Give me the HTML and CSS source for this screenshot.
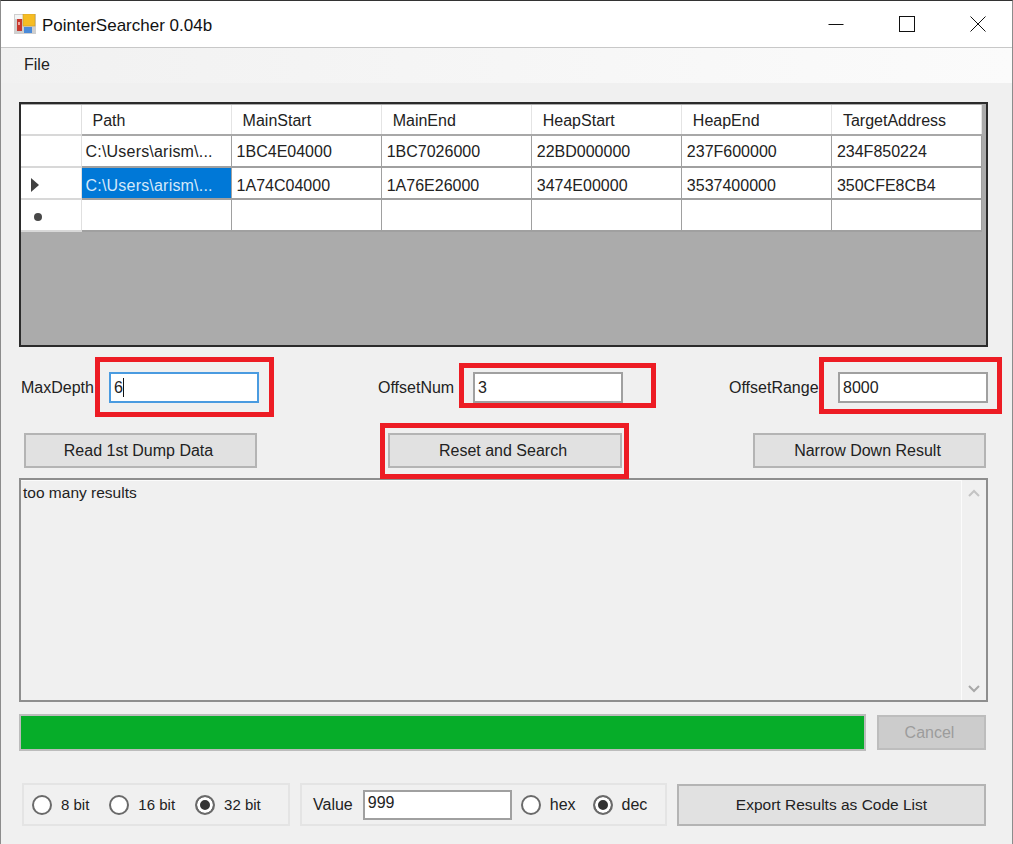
FILE: index.html
```html
<!DOCTYPE html>
<html>

<head>
    <title>PointerSearcher 0.04b</title>
    <link rel="stylesheet" href="styles.css">
</head>

<body>
    <div class="window">
        <div class="titlebar">
            <svg class="appIcon" width="22" height="20" viewBox="0 0 22 20">
                <rect x="0" y="0" width="22" height="20" fill="#cfcfcf" />
                <rect x="1" y="1" width="8" height="4" fill="#f4f4f4" />
                <rect x="3" y="5" width="5" height="12" fill="#c8362c" />
                <rect x="4" y="8" width="2" height="3" fill="#f0a8a0" />
                <rect x="9" y="0" width="12" height="12" fill="#f6bc22" stroke="#c89a30" stroke-width="0.6" />
                <rect x="10" y="13" width="8" height="6" fill="#4a8ad8" />
            </svg>
            <span class="appTitle">PointerSearcher 0.04b</span>
            <div class="winButtons">
                <svg width="16" height="16" viewBox="0 0 16 16"><path d="M0.5 8.5H15.5" stroke="#111" fill="none" /></svg>
                <svg width="16" height="16" viewBox="0 0 16 16"><rect x="0.5" y="0.5" width="15" height="15" stroke="#111" fill="none" /></svg>
                <svg width="16" height="16" viewBox="0 0 16 16"><path d="M0.5 0.5L15.5 15.5M15.5 0.5L0.5 15.5" stroke="#111" fill="none" /></svg>
            </div>
        </div>
        <div class="menubar"><span>File</span></div>

        <div class="content">
            <div class="gridView">
                <table>
                    <tr class="headRow">
                        <td class="rowHead"></td>
                        <td>Path</td>
                        <td>MainStart</td>
                        <td>MainEnd</td>
                        <td>HeapStart</td>
                        <td>HeapEnd</td>
                        <td>TargetAddress</td>
                    </tr>
                    <tr>
                        <td class="rowHead"></td>
                        <td class="pathCell">C:\Users\arism\...</td>
                        <td>1BC4E04000</td>
                        <td>1BC7026000</td>
                        <td>22BD000000</td>
                        <td>237F600000</td>
                        <td>234F850224</td>
                    </tr>
                    <tr class="currentRow">
                        <td class="rowHead"><span class="arrow"></span></td>
                        <td class="pathCell selected">C:\Users\arism\...</td>
                        <td>1A74C04000</td>
                        <td>1A76E26000</td>
                        <td>3474E00000</td>
                        <td>3537400000</td>
                        <td>350CFE8CB4</td>
                    </tr>
                    <tr>
                        <td class="rowHead"><span class="star"></span></td>
                        <td></td>
                        <td></td>
                        <td></td>
                        <td></td>
                        <td></td>
                        <td></td>
                    </tr>
                </table>
            </div>

            <div class="fieldRow">
                <div class="field depthField">
                    <span>MaxDepth</span>
                    <div class="textBox focused">6<span class="caret"></span></div>
                    <div class="mark markDepth"></div>
                </div>
                <div class="field numField">
                    <span>OffsetNum</span>
                    <div class="textBox">3</div>
                    <div class="mark markNum"></div>
                </div>
                <div class="field rangeField">
                    <span>OffsetRange</span>
                    <div class="textBox">8000</div>
                    <div class="mark markRange"></div>
                </div>
            </div>

            <div class="buttonRow">
                <div class="button">Read 1st Dump Data</div>
                <div class="button resetBtn">Reset and Search<div class="mark markReset"></div></div>
                <div class="button">Narrow Down Result</div>
            </div>

            <div class="logBox">
                <div class="logText">too many results</div>
                <div class="scrollBar">
                    <svg width="12" height="8" viewBox="0 0 12 8"><path d="M1 7L6 2L11 7" stroke="#c4c4c4" stroke-width="2" fill="none" /></svg>
                    <svg width="12" height="8" viewBox="0 0 12 8"><path d="M1 1L6 6L11 1" stroke="#a8a8a8" stroke-width="2" fill="none" /></svg>
                </div>
            </div>

            <div class="progressRow">
                <div class="progress"></div>
                <div class="button cancelBtn">Cancel</div>
            </div>

            <div class="bottomRow">
                <div class="groupBox bitGroup">
                    <span class="radio"></span><span class="radioLabel bitLabel">8 bit</span>
                    <span class="radio"></span><span class="radioLabel bitLabel">16 bit</span>
                    <span class="radio checked"></span><span class="radioLabel bitText">32 bit</span>
                </div>
                <div class="groupBox valueGroup">
                    <span class="valueLabel">Value</span>
                    <div class="textBox valueBox">999</div>
                    <span class="radio"></span><span class="radioLabel hexLabel">hex</span>
                    <span class="radio checked"></span><span class="radioLabel">dec</span>
                </div>
                <div class="button exportBtn">Export Results as Code List</div>
            </div>
        </div>
    </div>
</body>

</html>
```

FILE: styles.css
```css
html,
body {
    margin: 0;
    padding: 0;
}

body {
    width: 1013px;
    height: 844px;
    overflow: hidden;
    font-family: "Liberation Sans", Arial, sans-serif;
    font-size: 16px;
    color: #222;
    background: #f0f0f0;
}

.window {
    box-sizing: border-box;
    width: 1013px;
    height: 844px;
    border: 1px solid #8c8c8c;
    border-top-color: #333;
    border-bottom: 0;
    background: #f0f0f0;
}

.titlebar {
    display: flex;
    align-items: center;
    height: 46px;
    background: #fff;
    border-bottom: 1px solid #c8c8c8;
}

.appIcon {
    margin-left: 13px;
    margin-right: 6px;
}

.appTitle {
    margin-top: 3px;
    font-size: 17px;
    color: #111;
}

.winButtons {
    display: flex;
    gap: 55px;
    margin-left: auto;
    margin-right: 26px;
}

.menubar {
    height: 35px;
    padding-left: 23px;
    line-height: 33px;
    background: linear-gradient(to right, #f1f1f1, #fbfbfb);
}

.content {
    padding: 19px 24px 0 18px;
}

.gridView {
    box-sizing: border-box;
    height: 245px;
    background: #ababab;
    border: 2px solid #2b2b2b;
    padding-top: 1px;
}

table {
    border-collapse: collapse;
    table-layout: fixed;
    width: 961px;
    background: #fff;
}

td {
    box-sizing: border-box;
    width: 150px;
    height: 32px;
    padding: 2px 0 0 5px;
    border: 1px solid #a0a0a0;
    border-width: 0 1px 2px 1px;
    white-space: nowrap;
    overflow: hidden;
}

td:first-child {
    border-left: 0;
}

.headRow td {
    height: 30px;
    padding-left: 11px;
    border-color: #a8a8a8;
    border-right-color: #e4e4e4;
}

.currentRow td {
    padding-top: 5px;
}

td.rowHead {
    width: 60px;
    padding: 0;
    border-right-color: #e0e0e0;
    border-bottom-color: #d8d8d8;
}

.pathCell {
    padding-left: 4px;
    letter-spacing: 0.2px;
}

.selected {
    background: #0078d7;
    color: #d4e8fa;
}

.arrow {
    display: block;
    width: 0;
    height: 0;
    margin: 3px 0 0 10px;
    border-left: 8px solid #404040;
    border-top: 7px solid transparent;
    border-bottom: 7px solid transparent;
}

.star {
    display: block;
    width: 8px;
    height: 8px;
    margin: 4px 0 0 13px;
    border-radius: 50%;
    background: #484848;
}

.fieldRow {
    display: flex;
    margin-top: 25px;
}

.field {
    position: relative;
    display: flex;
    align-items: center;
    justify-content: space-between;
    height: 31px;
}

.depthField {
    width: 238px;
    margin-left: 2px;
}

.numField {
    width: 245px;
    margin-left: 119px;
}

.rangeField {
    width: 259px;
    margin-left: 106px;
}

.textBox {
    box-sizing: border-box;
    width: 150px;
    height: 31px;
    padding-left: 3px;
    line-height: 27px;
    background: #fff;
    border: 2px solid #a0a0a0;
}

.focused {
    border-color: #4a9be0;
}

.caret {
    display: inline-block;
    width: 1px;
    height: 19px;
    vertical-align: -4px;
    background: #111;
}

.mark {
    position: absolute;
    box-sizing: border-box;
    border: 5px solid #ed1c24;
    pointer-events: none;
}

.markDepth {
    left: 74px;
    top: -15px;
    width: 179px;
    height: 60px;
}

.markNum {
    left: 81px;
    top: -9px;
    width: 197px;
    height: 45px;
}

.markRange {
    left: 90px;
    top: -15px;
    width: 183px;
    height: 57px;
}

.buttonRow {
    display: flex;
    justify-content: space-between;
    margin-top: 30px;
    padding: 0 2px 0 5px;
}

.button {
    box-sizing: border-box;
    width: 233px;
    height: 35px;
    padding-right: 4px;
    line-height: 31px;
    text-align: center;
    background: #e1e1e1;
    border: 2px solid #b4b4b4;
}

.resetBtn {
    position: relative;
    width: 234px;
}

.markReset {
    left: -10px;
    top: -12px;
    width: 249px;
    height: 56px;
}

.logBox {
    box-sizing: border-box;
    display: flex;
    height: 224px;
    margin-top: 10px;
    border: 2px solid #8e8e8e;
}

.logText {
    flex: 1;
    padding: 3px 0 0 2px;
    font-size: 15.5px;
    border-top: 1px solid #fbfbfb;
}

.scrollBar {
    display: flex;
    flex-direction: column;
    justify-content: space-between;
    align-items: center;
    box-sizing: border-box;
    width: 25px;
    padding: 9px 0 7px;
    border-left: 1px solid #fbfbfb;
}

.progressRow {
    display: flex;
    align-items: center;
    margin-top: 12px;
}

.progress {
    box-sizing: border-box;
    width: 847px;
    height: 37px;
    background: #06ad29;
    border: 2px solid #bcbcbc;
}

.cancelBtn {
    width: 109px;
    height: 35px;
    margin-left: 11px;
    color: #9c9c9c;
    background: #cccccc;
    border-color: #bdbdbd;
}

.bottomRow {
    display: flex;
    align-items: flex-start;
    margin-top: 32px;
    padding-left: 3px;
}

.groupBox {
    box-sizing: border-box;
    display: flex;
    align-items: center;
    height: 43px;
    border: 2px solid #e4e4e4;
}

.bitGroup {
    width: 268px;
    padding-left: 8px;
}

.valueGroup {
    width: 367px;
    margin-left: 10px;
    padding-left: 11px;
}

.radio {
    box-sizing: border-box;
    flex: none;
    width: 20px;
    height: 20px;
    border: 2px solid #6a6a6a;
    border-radius: 50%;
    background: #fff;
}

.checked {
    background: #333;
    box-shadow: inset 0 0 0 3px #fff;
}

.radioLabel {
    margin-left: 9px;
}

.bitText {
    font-size: 15px;
}

.bitLabel {
    margin-right: 20px;
    font-size: 15px;
}

.hexLabel {
    margin-right: 17px;
}

.valueLabel {
    margin-right: 10px;
}

.valueBox {
    width: 149px;
    height: 30px;
    line-height: 22px;
    margin-right: 9px;
}

.exportBtn {
    width: 309px;
    height: 42px;
    margin-top: 1px;
    margin-left: 10px;
    padding-right: 0;
    font-size: 15.5px;
    line-height: 38px;
}
```
